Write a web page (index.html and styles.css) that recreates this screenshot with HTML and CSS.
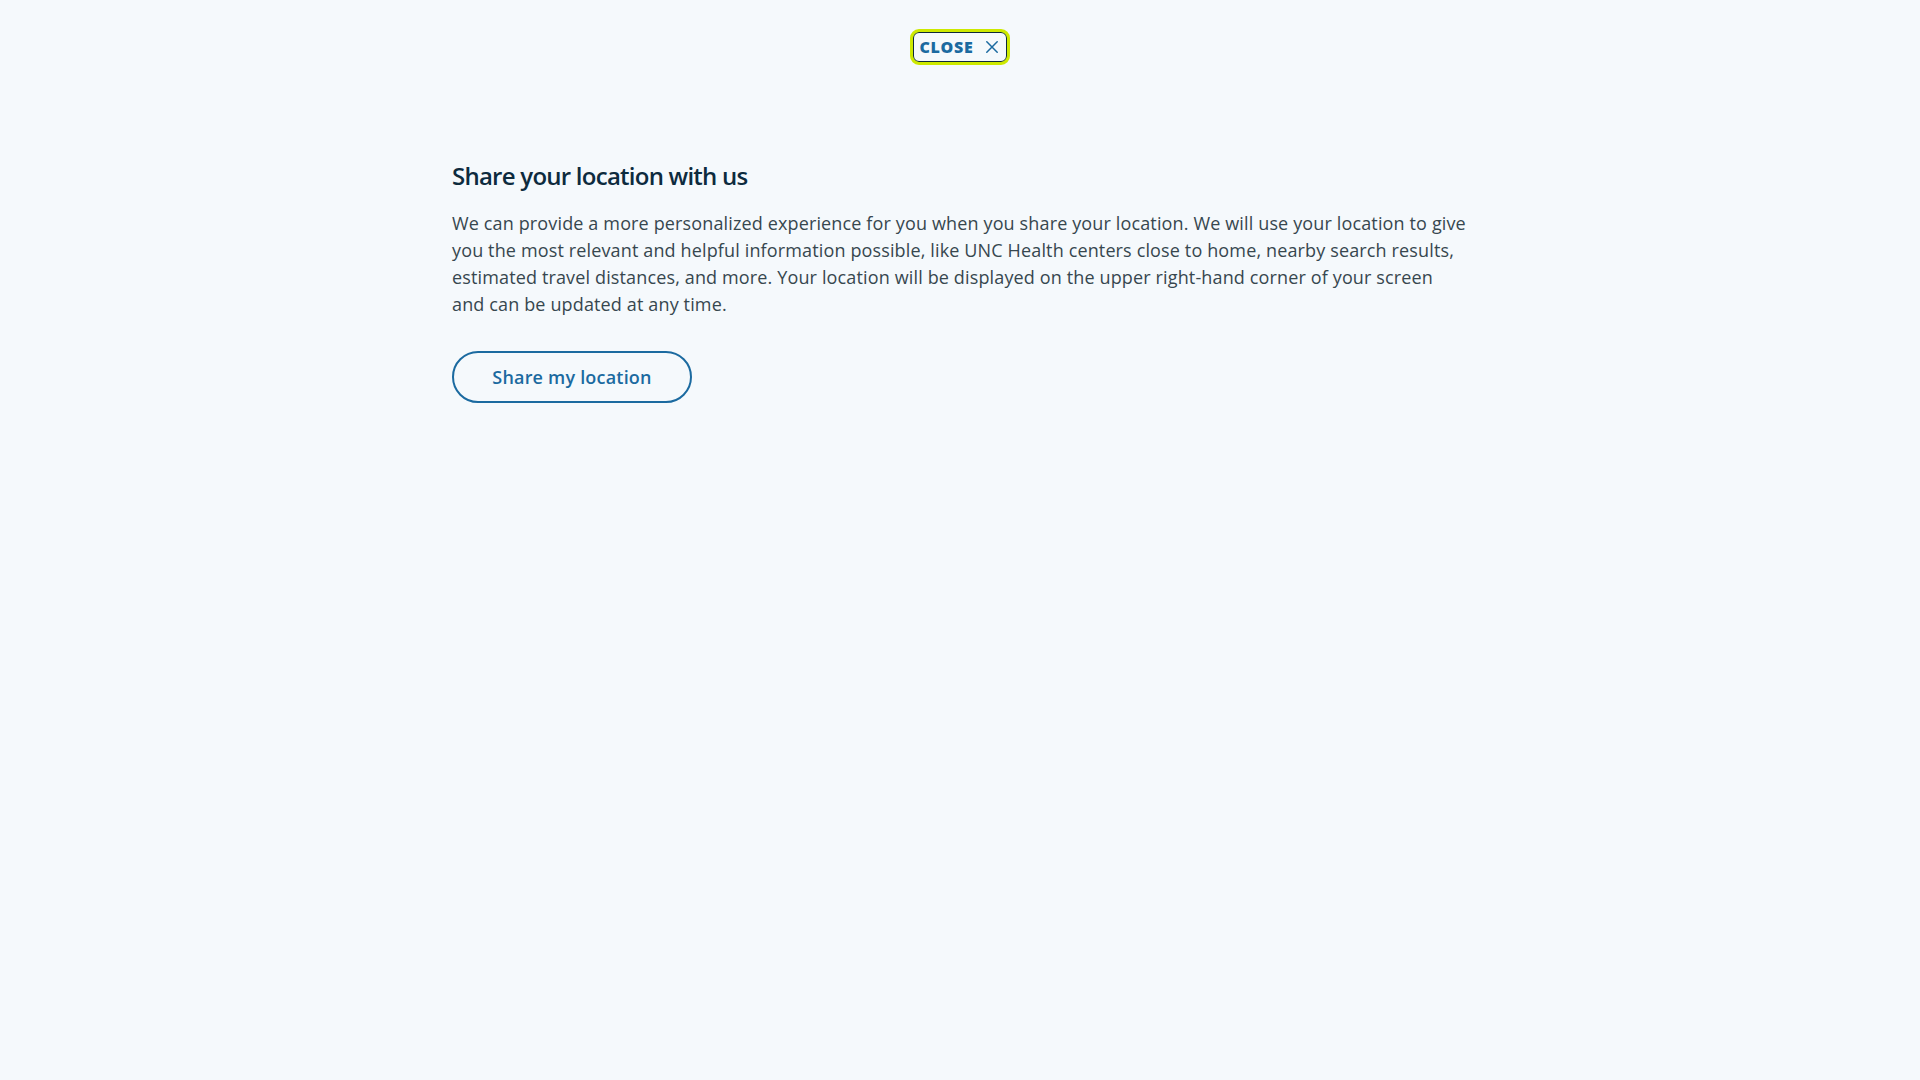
FILE: index.html
```html
<!DOCTYPE html>
<html lang="en">
<head>
<meta charset="utf-8">
<title>Share your location</title>
<link rel="stylesheet" href="styles.css">
</head>
<body>
<div class="page">
  <div class="top">
    <button class="close-btn" type="button">
      <span class="close-label">CLOSE</span>
      <svg class="close-icon" width="12" height="12" viewBox="0 0 12 12" aria-hidden="true">
        <path d="M0.8 0.8 L11.2 11.2 M11.2 0.8 L0.8 11.2" stroke="#1b6aa0" stroke-width="1.5" fill="none" stroke-linecap="round"/>
      </svg>
    </button>
  </div>
  <main class="content">
    <h1 class="title">Share your location with us</h1>
    <p class="desc">We can provide a more personalized experience for you when you share your location. We will use your location to give you the most relevant and helpful information possible, like UNC Health centers close to home, nearby search results, estimated travel distances, and more. Your location will be displayed on the upper right-hand corner of your screen and can be updated at any time.</p>
    <button class="share-btn" type="button">Share my location</button>
  </main>
</div>
</body>
</html>
```
FILE: styles.css
```css
html, body {
  margin: 0;
  padding: 0;
  background: #f5f9fc;
}
body {
  font-family: "Open Sans", "Noto Sans", sans-serif;
  min-height: 1080px;
}
.page {
  display: flex;
  flex-direction: column;
  align-items: center;
}
.top {
  padding-top: 32px;
  display: flex;
  justify-content: center;
}
.close-btn {
  display: flex;
  align-items: center;
  gap: 13px;
  height: 30px;
  padding: 0 8px 0 6px;
  background: #f5f9fc;
  border: 1px solid #0e2a3a;
  border-radius: 6px;
  outline: 3px solid #cde900;
  outline-offset: 0;
  box-shadow: 0 0 0 1px #cde900;
  font-family: "Open Sans", sans-serif;
  font-weight: 800;
  font-size: 16px;
  letter-spacing: 0.7px;
  color: #1b6aa0;
  cursor: pointer;
}
.close-icon {
  display: block;
}
.content {
  width: 1016px;
  margin-top: 98px;
}
.title {
  margin: 0;
  font-size: 24px;
  font-weight: 600;
  line-height: 32px;
  color: #0d2b3e;
  letter-spacing: -0.75px;
}
.desc {
  margin: 18px 0 0;
  font-size: 18px;
  line-height: 27px;
  color: #37474f;
  letter-spacing: 0.14px;
}
.share-btn {
  margin-top: 33px;
  width: 240px;
  height: 52px;
  border: 2px solid #1b6aa0;
  border-radius: 26px;
  background: transparent;
  font-family: "Open Sans", sans-serif;
  font-weight: 600;
  font-size: 18px;
  color: #1b6aa0;
  letter-spacing: 0.2px;
  cursor: pointer;
}
```
